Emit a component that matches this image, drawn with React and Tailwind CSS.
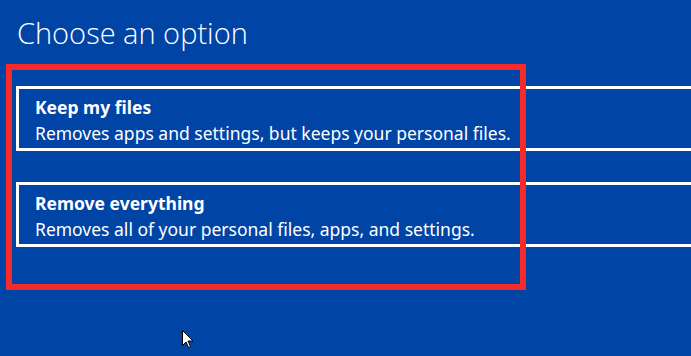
import React from "react";

function Cursor() {
  return (
    <svg width="12" height="19" viewBox="0 0 12 19" className="absolute left-[182px] top-[330px]">
      <path d="M0.5 0.5 L0.5 15.5 L4 12 L6.5 17.5 L8.5 16.5 L6 11 L11 11 Z" fill="#fff" stroke="#000" strokeWidth="1" strokeLinejoin="miter" />
    </svg>
  );
}

function Option({ title, desc }) {
  return (
    <div className="w-[700px] h-[65px] border-[3px] border-r-0 border-white pl-[16px] pt-[5px] leading-[26px] text-white text-[17.5px]">
      <div className="font-bold">{title}</div>
      <div>{desc}</div>
    </div>
  );
}

export default function App() {
  return (
    <div className="relative w-[691px] h-[356px] overflow-hidden bg-[#0044a6] font-['Noto_Sans',sans-serif]">
      <h1 className="pl-[17px] pt-[14px] text-[29px] leading-[38px] font-light text-white font-['Open_Sans',sans-serif]">
        Choose an option
      </h1>
      <div className="ml-[16px] mt-[34px] flex flex-col gap-[31px]">
        <Option title="Keep my files" desc="Removes apps and settings, but keeps your personal files." />
        <Option title="Remove everything" desc="Removes all of your personal files, apps, and settings." />
      </div>
      <div className="absolute left-[6px] top-[64px] w-[520px] h-[226px] border-[6px] border-[#f52b2b]" />
      <Cursor />
    </div>
  );
}
